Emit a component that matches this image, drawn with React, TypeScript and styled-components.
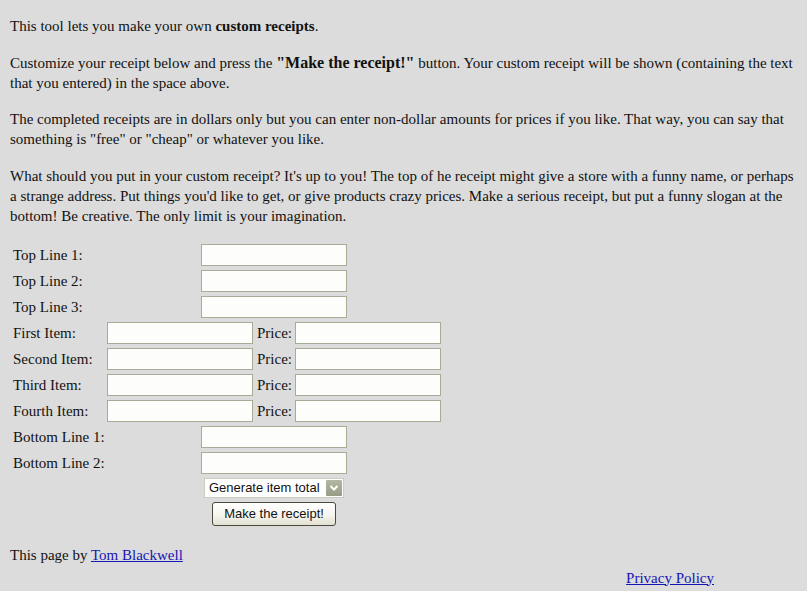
import React from 'react';
import styled, { createGlobalStyle } from 'styled-components';

const GlobalStyle = createGlobalStyle`
  html, body {
    margin: 0;
    padding: 0;
    background: #dcdcdc;
  }
  body {
    font-family: "Liberation Serif", "Times New Roman", serif;
    font-size: 15px;
    line-height: 20px;
    color: #111;
  }
`;

const Page = styled.div`
  padding: 0 10px 12px;
`;

const Paragraph = styled.p`
  margin: 16.5px 0 0;
  &:first-child {
    margin-top: 16px;
  }
`;

const Em = styled.b`
  font-weight: bold;
`;

const BigEm = styled.b`
  font-weight: bold;
  font-size: 16px;
`;

const FormGrid = styled.div`
  display: grid;
  grid-template-columns: 92px 146px 38px 146px;
  column-gap: 2px;
  row-gap: 4px;
  align-items: center;
  margin: 18px 0 0 3px;
`;

const Label = styled.span`
  white-space: nowrap;
`;

const PriceLabel = styled.span`
  padding-left: 2px;
`;

const TextBox = styled.input<{ $wide?: boolean }>`
  box-sizing: border-box;
  width: 146px;
  height: 22px;
  margin: 0;
  border: 1px solid #a6ad97;
  background: #fdfdfb;
  font: 13px "Liberation Sans", Arial, sans-serif;
  padding: 1px 3px;
  grid-column: ${(p) => (p.$wide ? '2 / 5' : 'auto')};
  justify-self: ${(p) => (p.$wide ? 'center' : 'start')};
  outline: none;
`;

const Centered = styled.div`
  grid-column: 2 / 5;
  justify-self: center;
  display: flex;
`;

const SelectBox = styled.div`
  box-sizing: border-box;
  width: 140px;
  height: 20px;
  display: flex;
  align-items: center;
  border: 1px solid #c9ccbf;
  background: #fff;
  padding: 1px;
`;

const SelectText = styled.select`
  flex: 1;
  min-width: 0;
  appearance: none;
  border: none;
  background: transparent;
  font: 13px "Liberation Sans", Arial, sans-serif;
  color: #111;
  padding: 0 0 0 3px;
  height: 16px;
  line-height: 16px;
  outline: none;
`;

const ArrowBox = styled.span`
  width: 16px;
  height: 16px;
  display: flex;
  align-items: center;
  justify-content: center;
  background: linear-gradient(#b3b8a4, #969c84);
  border-radius: 1px;
`;

const Button = styled.button`
  box-sizing: border-box;
  width: 124px;
  height: 24px;
  margin: 0;
  border: 1px solid #4b4b3c;
  border-radius: 3px;
  background: linear-gradient(#ffffff 0%, #f6f5ee 55%, #e3e1d3 100%);
  font: 13px "Liberation Sans", Arial, sans-serif;
  color: #111;
  padding: 0;
`;

const Credit = styled.div`
  margin-top: 19px;
`;

const Link = styled.a`
  color: #1515b5;
  text-decoration: underline;
`;

const PolicyRow = styled.div`
  margin-top: 3px;
  text-align: right;
  padding-right: 83px;
`;

const topLines = ['Top Line 1:', 'Top Line 2:', 'Top Line 3:'];
const items = ['First Item:', 'Second Item:', 'Third Item:', 'Fourth Item:'];
const bottomLines = ['Bottom Line 1:', 'Bottom Line 2:'];

const App: React.FC = () => {
  return (
    <Page>
      <GlobalStyle />
      <Paragraph>
        This tool lets you make your own <Em>custom receipts</Em>.
      </Paragraph>
      <Paragraph>
        Customize your receipt below and press the <BigEm>"Make the receipt!"</BigEm> button. Your custom receipt will
        be shown (containing the text that you entered) in the space above.
      </Paragraph>
      <Paragraph>
        The completed receipts are in dollars only but you can enter non-dollar amounts for prices if you like. That
        way, you can say that something is "free" or "cheap" or whatever you like.
      </Paragraph>
      <Paragraph>
        What should you put in your custom receipt? It's up to you! The top of he receipt might give a store with a
        funny name, or perhaps a strange address. Put things you'd like to get, or give products crazy prices. Make a
        serious receipt, but put a funny slogan at the bottom! Be creative. The only limit is your imagination.
      </Paragraph>

      <FormGrid>
        {topLines.map((label) => (
          <React.Fragment key={label}>
            <Label>{label}</Label>
            <TextBox $wide />
          </React.Fragment>
        ))}
        {items.map((label) => (
          <React.Fragment key={label}>
            <Label>{label}</Label>
            <TextBox />
            <PriceLabel>Price:</PriceLabel>
            <TextBox />
          </React.Fragment>
        ))}
        {bottomLines.map((label) => (
          <React.Fragment key={label}>
            <Label>{label}</Label>
            <TextBox $wide />
          </React.Fragment>
        ))}
        <Centered>
          <SelectBox>
            <SelectText defaultValue="total">
              <option value="total">Generate item total</option>
              <option value="none">No item total</option>
            </SelectText>
            <ArrowBox>
              <svg width="10" height="8" viewBox="0 0 10 8">
                <path d="M1.5 2 L5 5.5 L8.5 2" fill="none" stroke="#fff" strokeWidth="2" />
              </svg>
            </ArrowBox>
          </SelectBox>
        </Centered>
        <Centered>
          <Button type="button">Make the receipt!</Button>
        </Centered>
      </FormGrid>

      <Credit>
        This page by <Link href="#">Tom Blackwell</Link>
      </Credit>
      <PolicyRow>
        <Link href="#">Privacy Policy</Link>
      </PolicyRow>
    </Page>
  );
};

export default App;
